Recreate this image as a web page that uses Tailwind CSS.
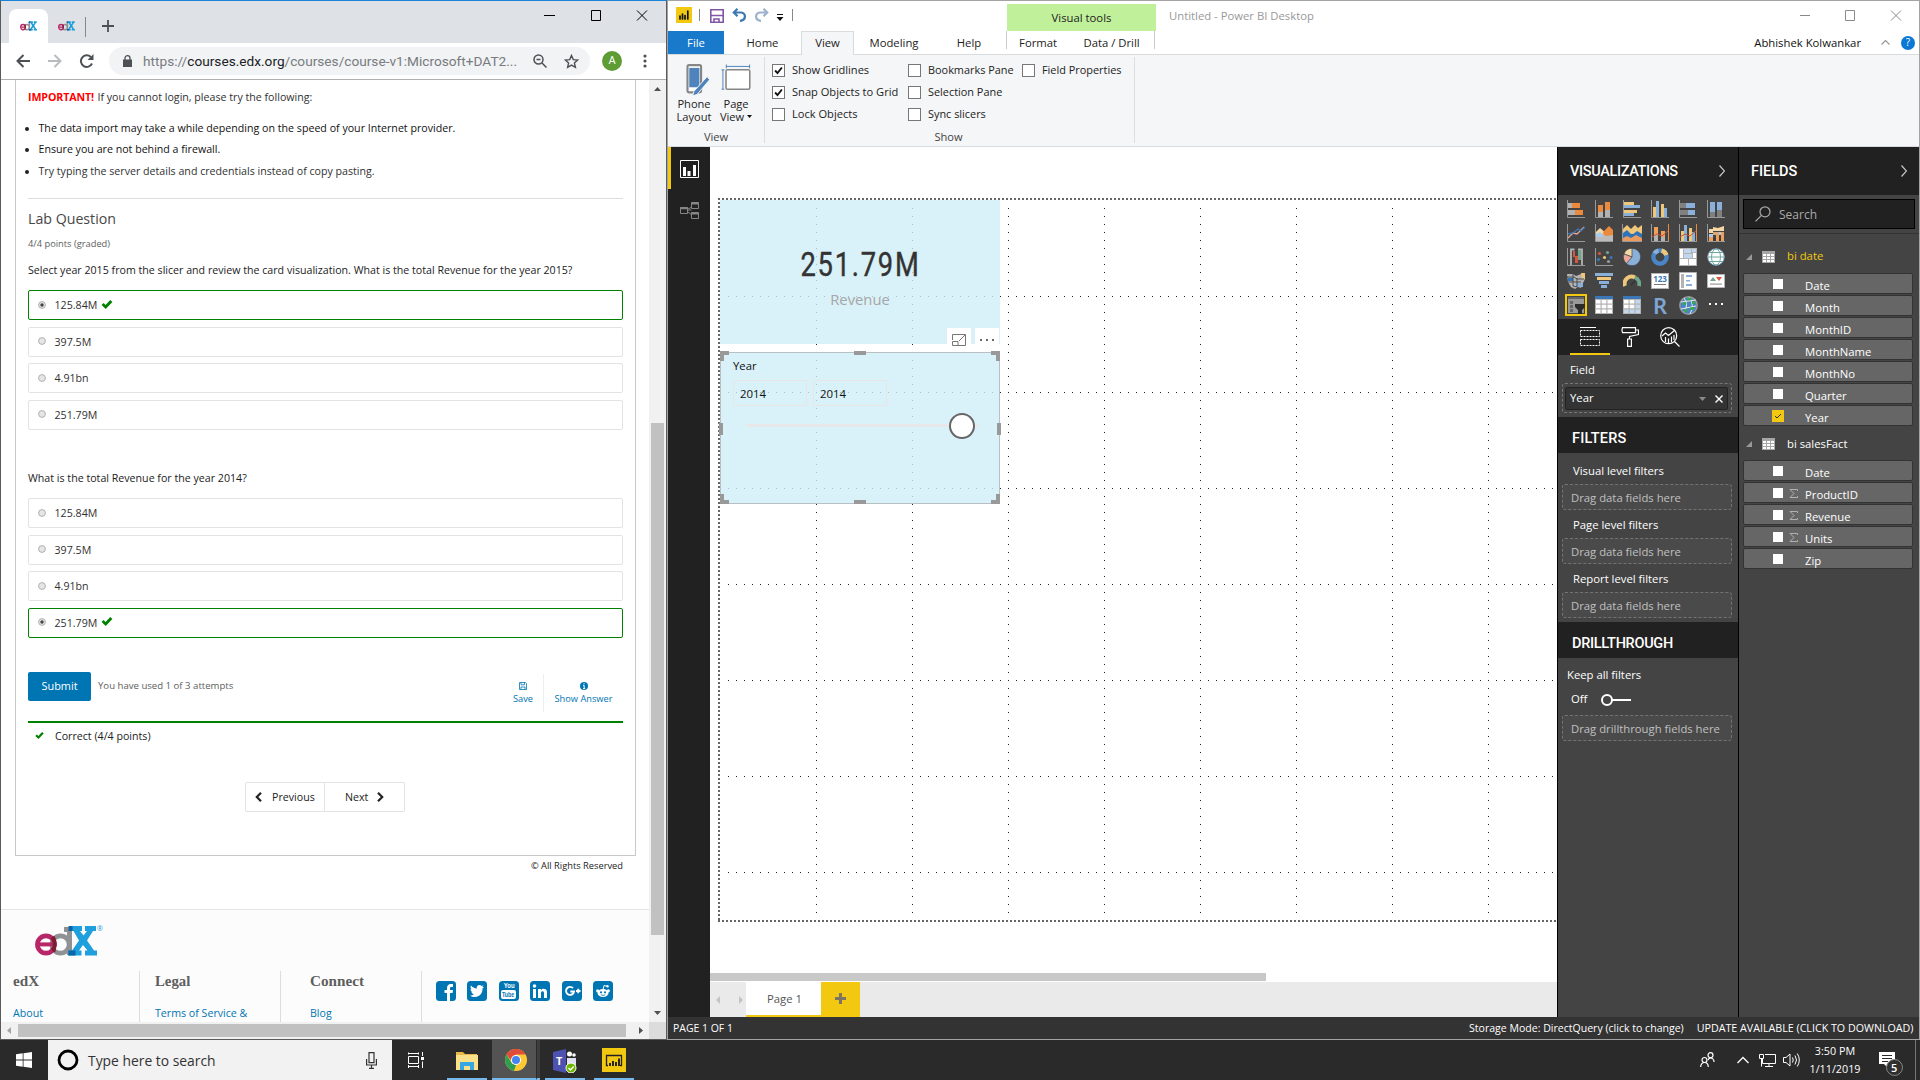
<!DOCTYPE html>
<html lang="en">
<head>
<meta charset="utf-8">
<title>Desktop</title>
<script src="https://cdn.jsdelivr.net/npm/@tailwindcss/browser@4"></script>
</head>
<body class="w-[1920px] h-[1080px] overflow-hidden bg-[#2a2a2a] font-['Open_Sans',sans-serif] flex flex-col whitespace-nowrap">
<svg class="hidden">
  <symbol id="check" viewBox="0 0 12 10"><path d="M0 5.600 2.200 3.400 4.400 5.600 9.600 0 12 2.200 4.600 10Z" fill="#008100"/></symbol>
  <symbol id="tick" viewBox="0 0 13 13"><path d="M2.500 6.500 5.300 9.500 10.500 3" fill="none" stroke="#111" stroke-width="2.200"/></symbol>
  <symbol id="chev" viewBox="0 0 6 12"><path d="M.5.5 5.500 6 .5 11.500" fill="none" stroke="#c8c8c8" stroke-width="1.200"/></symbol>
  <symbol id="table" viewBox="0 0 13 12"><path fill="#a6a6a6" d="M0 0h13v12H0z"/><path fill="#fff" d="M1 3h3v2H1zM5 3h3v2H5zM9 3h3v2H9zM1 6h3v2H1zM5 6h3v2H5zM9 6h3v2H9zM1 9h3v2H1zM5 9h3v2H5zM9 9h3v2H9z"/></symbol>
  <symbol id="edx" viewBox="0 0 64 32">
    <circle cx="25.500" cy="19.500" r="8.600" fill="none" stroke="#8f9194" stroke-width="4.600"/><path d="M31 2h6v28h-5V7h-3V2z" fill="#8f9194"/>
    <circle cx="11" cy="19.500" r="8.600" fill="none" stroke="#b72667" stroke-width="4.600"/><path d="M17 21.300h5.500v3.200H17z" fill="#fcfcfc"/><path d="M3 17.400h18.500v4H3z" fill="#b72667"/>
    <path d="M16 13.500c1.200-1.500 2.400-2.200 3.500-2.500 2.500 4 2.600 12.500.5 16.500-1.600-.8-3-2-4-3.500 2.400-2.500 2.400-7.500 0-10.500z" fill="#7b1c32"/>
    <path d="M36 1h11v5h-2l3.500 4.500L52 6h-2V1h11v5h-3l-6 9.500 7 10h3v5H50v-5h2.500L48 20l-4 5.500h2.500v5H33v-5h4l7-10L38.500 6H34V1z" fill="#1f9fdb"/><path d="M33.500 1h4v5h-4zM33.500 25.500h7v5h-7z" fill="#0b65a8"/>
  </symbol>
</svg>

<div class="flex h-[1040px] shrink-0">

  <!-- Browser window -->
  <section class="w-[667px] h-[1040px] shrink-0 flex flex-col border-t border-l border-r border-b border-t-[#1883d7] border-l-[#5a5a5a] border-r-[#5a5a5a] border-b-[#5a5a5a] bg-white">
    <header class="h-[42px] bg-[#dee1e6] flex shrink-0">
      <div class="mt-2 ml-2 w-[39px] h-[34px] rounded-t-[8px] bg-white flex items-center justify-center"><svg class="w-[17px] h-[10px]" viewBox="0 0 62 32" preserveAspectRatio="none"><use href="#edx" width="64" height="32"/></svg></div>
      <div class="mt-2 w-[37px] h-[34px] flex items-center justify-center"><svg class="w-[17px] h-[10px]" viewBox="0 0 62 32" preserveAspectRatio="none"><use href="#edx" width="64" height="32"/></svg></div>
      <i class="mt-[16px] w-px h-[20px] bg-[#85888c]"></i>
      <svg class="mt-[19px] ml-[16px] size-[12px]" viewBox="0 0 12 12"><path d="M6 0v12M0 6h12" stroke="#4d5156" stroke-width="1.800"/></svg>
      <svg class="mt-[9px] ml-[430px] w-[105px] h-[11px]" viewBox="0 0 105 11" fill="none" stroke="#000"><path d="M0 5.500h11M47.500.5h9v10h-9zM93 .5l10 10M103 .5l-10 10"/></svg>
    </header>
    <div class="h-[37px] border-b border-[#b0b0b0] flex items-center shrink-0">
      <svg class="ml-[15px] w-[78px] h-[14px]" viewBox="0 0 78 14" fill="none" stroke-width="2"><path d="M14 7H1.500M7.500 1 1.500 7l6 6" stroke="#4d5156"/><path d="M32 7h12.500M38.500 1l6 6-6 6" stroke="#b9bbbe"/><path d="M76 9.500A5.800 5.800 0 1 1 74.800 3" stroke="#4d5156"/><path d="M77.500 0v6h-6z" fill="#4d5156"/></svg>
      <div class="ml-[15px] w-[481px] h-[28px] rounded-full bg-[#f1f3f4] flex items-center">
        <svg class="ml-[14px] w-[9px] h-[12px]" viewBox="0 0 9 12"><path d="M0 4.500h9V12H0z" fill="#4d5156"/><path d="M2 5V3a2.500 2.300 0 0 1 5 0v2" fill="none" stroke="#4d5156" stroke-width="1.300"/></svg>
        <span class="ml-[11px] w-[384px] font-['Roboto'] text-[13.660px] text-[#787b80]">https://<span class="text-[#202124]">courses.edx.org</span>/courses/course-v1:Microsoft+DAT2...</span>
        <svg class="ml-[6px] size-[14px]" viewBox="0 0 14 14" fill="none" stroke="#4d5156" stroke-width="1.500"><circle cx="5.500" cy="5.500" r="4.500"/><path d="M9 9l4.500 4.500M3.500 5.500h4" /></svg>
        <svg class="ml-[17px] size-[15px]" viewBox="0 0 15 15" fill="none" stroke="#4d5156" stroke-width="1.400"><path d="M7.500 1.500l1.800 4.100 4.400.4-3.300 3 1 4.400-3.900-2.300-3.900 2.300 1-4.400-3.300-3 4.400-.4z"/></svg>
      </div>
      <span class="ml-[12px] size-[20px] rounded-full bg-[#5f9c34] text-white text-[11px] flex items-center justify-center font-['Roboto']">A</span>
      <svg class="ml-[21px] w-[4px] h-[14px]" viewBox="0 0 4 14" fill="#4d5156"><circle cx="2" cy="2" r="1.600"/><circle cx="2" cy="7" r="1.600"/><circle cx="2" cy="12" r="1.600"/></svg>
    </div>

    <div class="flex h-[942px] shrink-0">
      <main class="w-[648px] h-[942px] overflow-hidden text-[10.650px] text-[#313131] flex flex-col">
        <div class="ml-[14px] w-[621px] h-[776px] shrink-0 border-x border-b border-[#c8c8c8] px-[12px] flex flex-col">
          <div class="h-[34px] pt-[2px] flex items-center shrink-0"><b class="text-[#f00] tracking-[-0.120px]">IMPORTANT!</b><span class="ml-[3.500px]">If you cannot login, please try the following:</span></div>
          <ul class="pt-[4px] shrink-0 text-[#111]">
            <li class="h-[21.500px] flex items-center gap-[10px] -ml-[3.500px]"><i class="size-[4px] rounded-full bg-[#222]"></i>The data import may take a while depending on the speed of your Internet provider.</li>
            <li class="h-[21.500px] flex items-center gap-[10px] -ml-[3.500px]"><i class="size-[4px] rounded-full bg-[#222]"></i>Ensure you are not behind a firewall.</li>
            <li class="h-[21.500px] flex items-center gap-[10px] -ml-[3.500px] text-[#313131]"><i class="size-[4px] rounded-full bg-[#222]"></i>Try typing the server details and credentials instead of copy pasting.</li>
          </ul>
          <hr class="mt-[15.500px] border-0 h-px shrink-0 bg-[#ddd]">
          <h2 class="h-[40px] flex items-center text-[14.200px] shrink-0 text-[#474747]">Lab Question</h2>
          <p class="h-[10px] flex items-center text-[9.300px] shrink-0 text-[#5e5e5e]">4/4 points (graded)</p>
          <p class="h-[41px] pt-[2px] flex items-center shrink-0 text-[#222]">Select year 2015 from the slicer and review the card visualization. What is the total Revenue for the year 2015?</p>
          <div id="q1" class="h-[140px] shrink-0 flex flex-col justify-between"></div>
          <p class="mt-[28px] h-[40px] pt-[2px] flex items-center shrink-0 text-[#222]">What is the total Revenue for the year 2014?</p>
          <div id="q2" class="h-[140px] shrink-0 flex flex-col justify-between"></div>
          <div class="mt-[34px] h-[49px] flex shrink-0">
            <span class="w-[63px] h-[29px] rounded-[2px] bg-[#0075b4] text-white text-[10.900px] flex items-center justify-center">Submit</span>
            <span class="ml-[7px] h-[28px] flex items-center text-[9.600px] text-[#5e5e5e]">You have used 1 of 3 attempts</span>
            <div class="ml-auto flex text-[#0075b4] text-[9.260px] h-[38px] mt-[2px]">
              <div class="w-[41px] pt-[8px] flex flex-col items-center border-r border-[#eee]"><svg class="size-[8px] shrink-0" viewBox="0 0 8 8" fill="none" stroke="#0075b4"><path d="M.5.5h6l1 1v6h-7zM2 .5v2.300h3.500V.5M2 7.500V5h4v2.500" stroke-width=".8"/></svg><span class="h-[18px] flex items-center">Save</span></div>
              <div class="w-[79px] pt-[8px] flex flex-col items-center"><svg class="size-[8px] shrink-0" viewBox="0 0 8 8"><circle cx="4" cy="4" r="4" fill="#0075b4"/><path d="M4 1.200v1.200M3 3.600h1.200v3M3 6.600h2.200" stroke="#fff" fill="none"/></svg><span class="h-[18px] flex items-center">Show Answer</span></div>
            </div>
          </div>
          <div class="border-t-2 border-[#008100] h-[28px] flex items-center shrink-0 text-[#222]"><svg class="ml-[7px] w-[9px] h-[7px] mb-[2px]"><use href="#check"/></svg><span class="ml-[11px] pt-[2px]">Correct (4/4 points)</span></div>
          <div class="mt-[33px] h-[30px] w-[160px] ml-[217px] shrink-0 flex border border-[#e3e3e3] rounded-[2px] text-[#222]">
            <div class="w-[79px] border-r border-[#e3e3e3] flex items-center"><svg class="ml-[9px] w-[7px] h-[10px]" viewBox="0 0 7 10"><path d="M6 .8 1.800 5 6 9.200" fill="none" stroke="#222" stroke-width="2.200"/></svg><span class="ml-[10px] pt-[2px]">Previous</span></div>
            <div class="flex items-center"><span class="ml-[20px] pt-[2px]">Next</span><svg class="ml-[9px] w-[7px] h-[10px]" viewBox="0 0 7 10"><path d="M1 .8 5.200 5 1 9.200" fill="none" stroke="#222" stroke-width="2.200"/></svg></div>
          </div>
        </div>
        <p class="h-[20px] pr-[26px] flex items-center justify-end text-[9.300px] text-[#222] shrink-0">© All Rights Reserved</p>
        <footer class="mt-[33px] h-[113px] border-t border-[#e5e5e5] bg-[#fcfcfc] shrink-0">
          <div class="flex h-[61px]"><svg class="mt-[15px] ml-[34px] w-[64px] h-[32px]"><use href="#edx"/></svg><span class="mt-[14px] text-[7px] leading-[9px] -ml-[2px] text-[#1f9fdb]">®</span></div>
          <div class="flex h-[51px] text-[#0075b4]">
            <div class="w-[139px] pl-[12px] border-r border-[#ddd]"><h3 class="h-[21px] flex items-center font-['Liberation_Serif'] font-bold text-[15.200px] text-[#5e5e5e]">edX</h3><p class="h-[43px] flex items-center">About</p></div>
            <div class="w-[141px] pl-[15px] border-r border-[#ddd]"><h3 class="h-[21px] flex items-center font-['Liberation_Serif'] font-bold text-[14.800px] text-[#5e5e5e]">Legal</h3><p class="h-[43px] flex items-center">Terms of Service &amp;</p></div>
            <div class="w-[141px] pl-[29px] border-r border-[#ddd]"><h3 class="h-[21px] flex items-center font-['Liberation_Serif'] font-bold text-[15.200px] text-[#5e5e5e]">Connect</h3><p class="h-[43px] flex items-center">Blog</p></div>
            <div class="pl-[14px] pt-[10px] flex gap-[11.400px]">
              <svg class="size-[20px]" viewBox="0 0 20 20"><rect width="20" height="20" rx="3.500" fill="#0075b4"/><path d="M11 20v-8H8.500V9H11V7c0-2.600 1.600-4 4-4h2v3h-1.500C14.300 6 14 6.500 14 7.400V9h3l-.4 3H14v8z" fill="#fff"/></svg>
              <svg class="size-[20px]" viewBox="0 0 20 20"><rect width="20" height="20" rx="3.500" fill="#0075b4"/><path d="M17 6l-1.500 1.500c.2 4.500-3 8.500-7.500 8.500-2 0-3.500-.5-5-1.500 1.600 0 3-.3 4-1.200-1.300-.2-2.200-1-2.600-2.200h1.200C4.300 10.700 3.500 9.500 3.500 8l1.200.4C3.500 7.400 3.200 6 4 4.600 5.500 6.400 7.500 7.400 9.800 7.500c-.4-2 .9-3.500 2.700-3.500.9 0 1.600.4 2.100 1l1.900-.7-1.200 1.600z" fill="#fff"/></svg>
              <div class="size-[20px] rounded-[3.500px] bg-[#0075b4] flex flex-col items-center text-white font-['Liberation_Sans'] font-bold"><span class="text-[8px] leading-[8px] scale-x-75 mt-[1px]">You</span><span class="w-[15px] h-[9px] rounded-[2px] bg-white text-[#0075b4] text-[7px] leading-[9px] text-center"><span class="inline-block scale-x-75 -ml-[2px]">Tube</span></span></div>
              <svg class="size-[20px]" viewBox="0 0 20 20"><rect width="20" height="20" rx="3.500" fill="#0075b4"/><path d="M3 8h3v9H3zM8 8h3v1.200c1.600-2.200 6-1.800 6 2V17h-3v-5c0-2.200-3-2.200-3 0v5H8z" fill="#fff"/><circle cx="4.500" cy="5" r="1.800" fill="#fff"/></svg>
              <svg class="size-[20px]" viewBox="0 0 20 20"><rect width="20" height="20" rx="3.500" fill="#0075b4"/><path d="M11 7.200A4 4 0 1 0 12 10.500H8.300M14 10h4.500M16.200 7.800v4.500" fill="none" stroke="#fff" stroke-width="1.900"/></svg>
              <svg class="size-[20px]" viewBox="0 0 20 20"><rect width="20" height="20" rx="3.500" fill="#0075b4"/><ellipse cx="10" cy="12" rx="5.500" ry="4" fill="#fff"/><circle cx="4.700" cy="9.800" r="1.600" fill="#fff"/><circle cx="15.300" cy="9.800" r="1.600" fill="#fff"/><path d="M10 8.500l1-4 3 .8" fill="none" stroke="#fff"/><circle cx="14.500" cy="5.300" r="1.200" fill="#fff"/><circle cx="8" cy="11.300" r="1.100" fill="#0075b4"/><circle cx="12" cy="11.300" r="1.100" fill="#0075b4"/><path d="M7.800 13.800q2.200 1.200 4.400 0" fill="none" stroke="#0075b4" stroke-width=".8"/></svg>
            </div>
          </div>
        </footer>
      </main>
      <div class="w-[17px] bg-[#f1f1f1] flex flex-col items-center">
        <svg class="mt-[7px] w-[7px] h-[4px]" viewBox="0 0 7 4"><path d="M0 4 3.500 0 7 4z" fill="#505050"/></svg>
        <i class="mt-[332px] w-[13px] h-[512px] bg-[#c1c1c1]"></i>
        <svg class="mt-[76px] w-[7px] h-[4px]" viewBox="0 0 7 4"><path d="M0 0 3.500 4 7 0z" fill="#505050"/></svg>
      </div>
    </div>
    <div class="h-[17px] bg-[#f1f1f1] flex items-center">
      <svg class="ml-[6px] w-[4px] h-[7px]" viewBox="0 0 4 7"><path d="M4 0 0 3.500 4 7z" fill="#a3a3a3"/></svg>
      <i class="ml-[7px] w-[608px] h-[13px] bg-[#c1c1c1]"></i>
      <svg class="ml-[13px] w-[4px] h-[7px]" viewBox="0 0 4 7"><path d="M0 0 4 3.500 0 7z" fill="#505050"/></svg>
      <i class="ml-auto w-[17px] h-[17px] bg-[#dcdcdc]"></i>
    </div>
  </section>

  <!-- Power BI Desktop window -->
  <section class="w-[1253px] h-[1040px] shrink-0 flex flex-col border border-[#a3a3a3] bg-white text-[11.300px] text-[#222]">
    <header class="h-[30px] flex shrink-0">
      <svg class="ml-[8px] mt-[6px] size-[16px]" viewBox="0 0 16 16"><path fill="#f2c811" d="M0 0h16v16H0z"/><path d="M4 9v3M6.500 7v5M9 8.500V12M11.800 4v8" stroke="#111" stroke-width="1.700" stroke-linecap="round"/></svg>
      <i class="mt-[8px] ml-[7px] w-px h-[12px] bg-[#888]"></i>
      <svg class="ml-[10px] mt-[8px] size-[14px]" viewBox="0 0 14 14" fill="none" stroke="#8455a5" stroke-width="1.600"><path d="M.8.8h12.400v12.400H.8zM.8 6.500h12.400"/><path d="M4 13.200V10h5v3.200" /></svg>
      <svg class="ml-[8px] mt-[7px] w-[15px] h-[14px]" viewBox="0 0 15 14" fill="none" stroke="#3e78b3" stroke-width="2.200"><path d="M5.500.8 1.800 4.500l3.700 3.700M2 4.500h6.500c6 0 6 7.500-.5 8.500"/></svg>
      <svg class="ml-[7px] mt-[7px] w-[15px] h-[14px]" viewBox="0 0 15 14" fill="none" stroke="#9db2cd" stroke-width="2.200"><path d="M9.500.8l3.700 3.700-3.700 3.700M13 4.500H6.500C.5 4.500.5 12 7 13"/></svg>
      <svg class="ml-[7px] mt-[13px] w-[8px] h-[7px]" viewBox="0 0 8 7"><path d="M1 .5h6" stroke="#111"/><path d="M.5 3h7L4 7z" fill="#111"/></svg>
      <i class="mt-[8px] ml-[8px] w-px h-[12px] bg-[#888]"></i>
      <div class="mt-[3px] ml-[214px] w-[149px] h-[27px] pt-[2px] bg-[#c1f09b] flex items-center justify-center">Visual tools</div>
      <span class="ml-[13px] h-[30px] flex items-center text-[#999]">Untitled - Power BI Desktop</span>
      <svg class="mt-[9px] ml-auto mr-[16px] w-[103px] h-[11px]" viewBox="0 0 103 11" fill="none" stroke="#8a8a8a"><path d="M0 5.500h10M45.500.5h9v10h-9zM91 .5l10 10M101 .5l-10 10"/></svg>
    </header>
    <nav class="h-[24px] flex shrink-0 -mb-px relative">
      <span class="w-[56px] h-[23px] pt-[2px] bg-[#1979ca] text-white flex items-center justify-center">File</span>
      <span class="w-[77px] h-[23px] pt-[2px] flex items-center justify-center">Home</span>
      <span class="w-[53px] h-[24px] flex items-center justify-center bg-[#f5f6f7] border border-b-0 border-[#dadbdc]">View</span>
      <span class="w-[80px] h-[23px] pt-[2px] flex items-center justify-center">Modeling</span>
      <span class="w-[70px] h-[23px] pt-[2px] flex items-center justify-center">Help</span>
      <div class="ml-[2px] w-[149px] h-[18px] flex border-x border-[#ccc]">
        <span class="w-[63px] h-[23px] pt-[2px] flex items-center justify-center">Format</span>
        <span class="w-[86px] h-[23px] pt-[2px] flex items-center justify-center">Data / Drill</span>
      </div>
      <div class="ml-auto flex items-center h-[23px] pr-[4px] text-[#111]"><span class="pt-[1px]">Abhishek Kolwankar</span>
        <svg class="ml-[20px] w-[9px] h-[5px]" viewBox="0 0 9 5"><path d="M.5 4.500l4-4 4 4" fill="none" stroke="#999" stroke-width="1.200"/></svg>
        <span class="ml-[11px] size-[14px] rounded-full bg-[#0a78d4] text-white text-[10px] flex items-center justify-center">?</span>
      </div>
    </nav>
    <div class="h-[93px] bg-[#f5f6f7] border-y border-[#dadbdc] flex shrink-0 text-[11.100px]">
      <div class="w-[96px] flex flex-col">
        <div class="flex h-[72px] pt-[9px] pl-[5px]">
          <div class="w-[42px] flex flex-col items-center leading-[13px]">
            <svg class="w-[26px] h-[32px] ml-[6px]" viewBox="0 0 26 33"><rect x="3.200" y="1.200" width="14" height="28" rx="1.500" fill="#fff" stroke="#868686" stroke-width="2.200"/><path d="M5 4h10.500v20H5z" fill="#4e83bc"/><path d="M23.500 13l2.500 3.200L13 31.500l-4.500 1.300 1.300-4.600z" fill="#4e83bc" stroke="#f5f6f7"/></svg>
            <span class="mt-[1px]">Phone</span><span>Layout</span>
          </div>
          <div class="w-[42px] flex flex-col items-center leading-[13px]">
            <svg class="w-[30px] h-[32px]" viewBox="0 0 30 33" fill="none"><path d="M5 2.500h24M5 .5v4M29 .5v4M1.500 6v20M0 6h3M0 26h3" stroke="#4e83bc"/><rect x="4.700" y="6" width="24.500" height="20" rx="1.500" fill="#fff" stroke="#868686" stroke-width="1.600"/></svg>
            <span class="mt-[1px]">Page</span><span class="flex items-center gap-[3px]">View<svg class="w-[5px] h-[3px]" viewBox="0 0 5 3"><path d="M0 0h5L2.500 3z" fill="#111"/></svg></span>
          </div>
        </div>
        <span class="text-center h-[19px] leading-[20px] text-[#444]">View</span>
      </div>
      <i class="mt-[2px] w-px h-[86px] bg-[#dcdddf]"></i>
      <div class="w-[369px] flex flex-col">
        <div id="checks" class="flex h-[72px] pt-[4px] pl-[6px]"></div>
        <span class="text-center h-[19px] leading-[20px] text-[#444]"><span class="mr-[2px]">Show</span></span>
      </div>
      <i class="mt-[2px] w-px h-[86px] bg-[#dcdddf]"></i>
    </div>

    <div class="h-[870px] flex shrink-0">
      <aside class="w-[42px] bg-[#212121] flex flex-col">
        <div class="h-[42px] border-l-[3px] border-[#f2c811] pl-[9px] pt-[13px]"><svg class="w-[19px] h-[18px]" viewBox="0 0 19 18"><path d="M.5.5h18v17H.5z" fill="none" stroke="#fff"/><path d="M3 7h3v9H3zM7.500 11h3v5h-3zM13 5h3v11h-3z" fill="#fff"/></svg></div>
        <svg class="ml-[12px] mt-[13px] w-[20px] h-[18px]" viewBox="0 0 20 18" fill="none" stroke="#858585"><path d="M.5 5.500h7v6h-7zM11.500.5h7v6h-7zM11.500 10.500h7v6h-7zM8 8h3.500M8 7l4-2M8 10l4 3"/><path d="M0 6.200h8M11 1.500h8M11 11.500h8" stroke-width="2"/></svg>
      </aside>
      <div class="w-[847px] flex flex-col">
        <div class="relative h-[826px] overflow-hidden bg-white">
          <svg class="absolute inset-0 w-[847px] h-[826px]" shape-rendering="crispEdges">
            <defs>
              <pattern id="cols" x="106" y="61" width="96" height="8" patternUnits="userSpaceOnUse"><rect width="1" height="1" fill="#222"/></pattern>
              <pattern id="rows" x="18" y="149" width="8" height="96" patternUnits="userSpaceOnUse"><rect width="1" height="1" fill="#222"/></pattern>
            </defs>
            <rect x="14" y="58" width="833" height="708" fill="url(#cols)"/><rect x="14" y="58" width="833" height="714" fill="url(#rows)"/>
            <path d="M8 52h839M8 774h839M9 51v724" stroke="#666" stroke-width="2" stroke-dasharray="2 2"/>
          </svg>
          <div class="absolute left-[10px] top-[53px] w-[280px] h-[144px] bg-[#ceedf6]/78 flex flex-col items-center">
            <span class="mt-[45px] h-[40px] leading-[40px] font-['Roboto'] text-[32.500px] [-webkit-text-stroke:0.400px_#333] tracking-[2.100px] scale-x-[0.840] text-[#333]">251.79M</span>
            <span class="mt-px h-[26px] leading-[26px] text-[14.770px] text-[#a6a6a6]">Revenue</span>
          </div>
          <svg class="absolute left-[237px] top-[181px] w-[52px] h-[18px]" viewBox="0 0 52 18" fill="none"><path d="M0 0h24v18H0zM28 0h24v18H28z" fill="#fff"/><path d="M5.500 12V6.500h9M18.500 10v7.500h-13V13.500h5.500v4M12 13l6-6M14 6.500h4.500V11" stroke="#777"/><path d="M33 11h2v2h-2zM39 11h2v2h-2zM45 11h2v2h-2z" fill="#666"/></svg>
          <div class="absolute left-[10px] top-[205px] w-[280px] h-[152px] bg-[#ceedf6]/78 border border-[#b9bfc2] text-[#111] pl-[12px] pt-[4px]">
            <p class="h-[17px] leading-[17px]">Year</p>
            <div class="mt-[6px] flex gap-[6px] text-[11.400px]">
              <span class="w-[74px] h-[26px] border border-[#eae5e5] pl-[6px] leading-[25px]">2014</span>
              <span class="w-[74px] h-[26px] border border-[#eae5e5] pl-[6px] leading-[25px]">2014</span>
            </div>
            <div class="relative mt-[18px] ml-[13px] w-[233px] h-[3px] rounded bg-[#e8e8e8]"><i class="absolute left-[203px] -top-[11px] size-[26px] rounded-full bg-white border-2 border-[#666]"></i></div>
          </div>
          <svg class="absolute left-[9px] top-[203px] w-[283px] h-[156px]" viewBox="0 0 283 156" fill="none" stroke="#999" stroke-width="4"><path d="M10 3H3v8M272 3h7v8M10 152H3v-8M272 152h7v-8M135 3h12M135 152h12M2 73v12M280 73v12"/></svg>
        </div>
        <i class="w-[556px] h-[8px] bg-[#c8c8c8] shrink-0"></i>
        <div class="mt-px h-[35px] bg-[#eaeaea] flex shrink-0">
          <svg class="ml-[6px] mt-[14px] w-[28px] h-[8px]" viewBox="0 0 28 8" fill="#c4c4c4"><path d="M4 0v8L0 4zM23 0v8l4-4z"/></svg>
          <span class="ml-[2px] w-[75px] h-[35px] pt-[2px] pl-[2px] bg-white border-b-2 border-[#f2c811] flex items-center justify-center text-[#555]">Page 1</span>
          <span class="w-[39px] h-[35px] bg-[#f2c811] flex justify-center"><svg class="mt-[11px] size-[11px]" viewBox="0 0 11 11"><path d="M5.500 0v11M0 5.500h11" stroke="#7d7464" stroke-width="3"/></svg></span>
        </div>
      </div>

      <aside class="w-[181px] border-l border-black bg-[#444] text-white flex flex-col">
        <h2 class="h-[48px] shrink-0 bg-[#212121] flex items-center px-[12px] font-['Roboto'] font-medium text-[14.500px] tracking-[-0.350px]"><span class="pt-[2px]">VISUALIZATIONS</span><svg class="ml-auto mr-[1px] w-[6px] h-[12px]"><use href="#chev"/></svg></h2>
        <div class="h-[124px] shrink-0 grid grid-cols-[repeat(6,28px)] auto-rows-[24px] pl-[9px] pt-[5px]">
          <svg class="size-[18px]" viewBox="0 0 18 18"><path d="M.5 0v17.500H18" fill="none" stroke="#999"/><path fill="#b3b3b3" d="M1 3h4v5H1zM1 10h7v5H1z"/><path fill="#ea8a3e" d="M5 3h8v5H5zM8 10h8v5H8z"/></svg>
          <svg class="size-[18px]" viewBox="0 0 18 18"><path d="M.5 0v17.500H18" fill="none" stroke="#999"/><path fill="#b3b3b3" d="M3 12h5v5H3zM10 9h5v8h-5z"/><path fill="#ea8a3e" d="M3 5h5v7H3zM10 2h5v8h-5z"/></svg>
          <svg class="size-[18px]" viewBox="0 0 18 18"><path d="M.5 0v17.500H18" fill="none" stroke="#999"/><path fill="#efc77b" d="M1 2h10v3H1zM1 10h13v3H1z"/><path fill="#8ab0da" d="M1 5h16v3H1zM1 13h10v3H1z"/></svg>
          <svg class="size-[18px]" viewBox="0 0 18 18"><path d="M.5 0v17.500H18" fill="none" stroke="#999"/><path fill="#efc77b" d="M2 7h3v10H2zM10 4h3v13h-3z"/><path fill="#8ab0da" d="M5 1h3v16H5zM13 8h3v9h-3z"/></svg>
          <svg class="size-[18px]" viewBox="0 0 18 18"><path d="M.5 0v17.500H18" fill="none" stroke="#999"/><path fill="#808080" d="M1 3h6v5H1zM1 10h8v5H1z"/><path fill="#8ab0da" d="M7 3h9v5H7zM9 10h7v5H9z"/></svg>
          <svg class="size-[18px]" viewBox="0 0 18 18"><path d="M.5 0v17.500H18" fill="none" stroke="#999"/><path fill="#808080" d="M3 12h5v5H3zM10 10h5v7h-5z"/><path fill="#8ab0da" d="M3 2h5v10H3zM10 2h5v8h-5z"/></svg>

          <svg class="size-[18px]" viewBox="0 0 18 18" fill="none"><path d="M.5 0v17.500H18" stroke="#999"/><path d="M1 14l5-5 4 1 7-7" stroke="#e6a595" stroke-width="1.300"/><path d="M1 10l5-1 5-4 3 2 4-4" stroke="#3b77b7" stroke-width="1.300"/></svg>
          <svg class="size-[18px]" viewBox="0 0 18 18"><path d="M.5 0v17.500H18" fill="none" stroke="#999"/><path d="M1 8l4-4 6 5 7 3v5H1z" fill="#f3d9a8"/><path d="M8 8l6-6 4 4v8H9z" fill="#ea8a3e"/><path d="M1 11l5-2 5 3 7-1v6H1z" fill="#bcbcbc"/><path d="M1 10l4-2 4 5H1z" fill="#a9cbe9"/></svg>
          <svg class="-ml-px w-[20px] h-[18px]" viewBox="0 0 20 18"><path d="M.5 0v17.500H20" fill="none" stroke="#999"/><path d="M1 5l4-4 4 4 4-4 3 3 4-3v9H1z" fill="#efc77b"/><path d="M1 9l4-3 5 5 5-4 5 3v5H1z" fill="#2e74bd"/><path d="M1 14l4-2 4 2 5-3 6 3v3H1z" fill="#ea9a5e"/></svg>
          <svg class="size-[18px]" viewBox="0 0 18 18"><path d="M.5 0v17.500H18" fill="none" stroke="#999"/><path fill="#b3b3b3" d="M3 11h4v6H3zM10 13h4v4h-4z"/><path fill="#f0a05a" d="M3 3h4v8H3zM10 7h4v6h-4z"/><path d="M1 13l5-3 5 2 6-5" fill="none" stroke="#c8543a"/><path d="M17.500 0v17" stroke="#ea8a3e"/></svg>
          <svg class="size-[18px]" viewBox="0 0 18 18"><path d="M.5 0v17.500H18" fill="none" stroke="#999"/><path fill="#efc77b" d="M2 7h3v10H2zM10 4h3v13h-3z"/><path fill="#8ab0da" d="M5 1h3v16H5zM13 8h3v9h-3z"/><path d="M1 13l5-3 5 2 6-5" fill="none" stroke="#c8543a"/><path d="M17.500 0v17" stroke="#ea8a3e"/></svg>
          <svg class="size-[18px]" viewBox="0 0 18 18"><path d="M.5 0v17.500H18" fill="none" stroke="#999"/><path fill="#f5d6a6" d="M2 5h4v4H2zM6 3l5 1 6-2v5H6z"/><path fill="#f0a05a" d="M2 13h4v4H2zM9 10h3v7H9zM14 8h3v9h-3z"/><path fill="#3c3c3c" d="M6 14h3v3H6zM12 13h2v4h-2z"/><path fill="#d9a877" d="M6 8h8v3H6z"/><path fill="#a9cbe9" d="M2 10h4v3H2zM12 8h2v3h-2z"/></svg>

          <svg class="size-[18px]" viewBox="0 0 18 18"><path d="M.5 0v17.500H18" fill="none" stroke="#999"/><path d="M4 17V1.500h3.500M11 1.500h4V17" fill="none" stroke="#b3b3b3" stroke-width="1.800"/><path fill="#d9543c" d="M6 3h2v6H6zM8 8h3v7H8z"/><path fill="#70a58e" d="M11 2h3v10h-3z"/></svg>
          <svg class="size-[18px]" viewBox="0 0 18 18"><path d="M.5 0v17.500H18" fill="none" stroke="#999"/><circle cx="4.500" cy="5.500" r="1.600" fill="#d9543c"/><circle cx="12.500" cy="4.500" r="1.600" fill="#70a58e"/><circle cx="9.500" cy="9.500" r="1.600" fill="#efc77b"/><circle cx="3.500" cy="11.500" r="1.600" fill="#3b77b7"/><circle cx="16" cy="9.500" r="1.600" fill="#3b77b7"/><circle cx="13.500" cy="13.500" r="1.600" fill="#999"/></svg>
          <svg class="size-[18px]" viewBox="0 0 18 18" stroke="#444" stroke-width=".7"><circle cx="9" cy="9" r="8.700" fill="#8ab0da"/><path d="M9 9V.3A8.700 8.700 0 0 0 1 6z" fill="#f3d9a8"/><path d="M9 9 1 6a8.700 8.700 0 0 0 2.500 9.500z" fill="#eaa89c"/></svg>
          <svg class="size-[18px]" viewBox="0 0 18 18" fill="none" stroke-width="4.400"><circle cx="9" cy="9" r="6.600" stroke="#4a86c6"/><path d="M10.500 2.600a6.600 6.600 0 0 1 4.800 4.500" stroke="#efc77b"/><path d="M3.500 5.300a6.600 6.600 0 0 1 4-2.700" stroke="#8ab0da"/></svg>
          <svg class="size-[18px]" viewBox="0 0 18 18"><path fill="#b3b3b3" d="M0 0h18v18H0z"/><path fill="#fff" d="M1 1h3v9H1zM1 11h8v6H1zM10 11h7v6h-7zM14 5h3v5h-3z"/><path fill="#c2d6ee" d="M5 1h7v4H5zM5 6h8v4H5zM13 1h4v3h-4z"/></svg>
          <svg class="size-[18px]" viewBox="0 0 18 18" fill="none" stroke="#6fa79a"><circle cx="9" cy="9" r="8.200" fill="#fff" stroke="#8ab0da"/><ellipse cx="9" cy="9" rx="4.500" ry="8"/><path d="M1 9h16M2.500 4.500h13M2.500 13.500h13"/></svg>

          <svg class="size-[18px]" viewBox="0 0 18 18"><path d="M0 2h6l3 2 5-2 4-1v6l-2 4-2 5-3-1-3 2-4-2-3-5z" fill="#b3b3b3"/><path d="M1 6h5v3H1z" fill="#2e74bd"/><path d="M14 1h4v6h-3z" fill="#efc77b"/><path d="M9 11h7v4H9z" fill="#8ab0da"/><path d="M0 5h7l3 2h7M6 2v12l4 1M10 6v9M1 10h13" fill="none" stroke="#444" stroke-width=".9"/></svg>
          <svg class="size-[18px]" viewBox="0 0 18 18"><path fill="#8ab0da" d="M0 1h18v3H0z"/><path fill="#efc77b" d="M2 5h14v3H2z"/><path fill="#8ab0da" d="M4 9h10v3H4zM6 13h6v3H6z"/></svg>
          <svg class="size-[18px]" viewBox="0 0 18 18" fill="none" stroke-width="4"><path d="M2 14a7 7 0 0 1 10-8.500" stroke="#efc77b"/><path d="M12 5.500A7 7 0 0 1 16 14" stroke="#70a58e"/><path d="M8 13l4-4" stroke="#333" stroke-width="1.500"/></svg>
          <div class="w-[18px] h-[16px] mt-[1px] bg-white border border-[#b3b3b3] flex flex-col items-center"><span class="text-[8px] leading-[9px] font-bold text-[#3b77b7]">123</span><i class="mt-px w-[12px] h-px bg-[#777]"></i></div>
          <svg class="size-[18px]" viewBox="0 0 18 18"><path fill="#fff" stroke="#b3b3b3" d="M.5.5h17v17H.5z"/><path fill="#b3b3b3" d="M2 2h3v14H2z"/><path fill="#8ab0da" d="M7 3h6v2H7zM7 8h4v1.500H7zM7 12h6v2H7z"/></svg>
          <svg class="size-[18px]" viewBox="0 0 18 18"><path fill="#fff" stroke="#b3b3b3" d="M.5 2.500h17v13H.5z"/><path fill="#70a58e" d="M3 9l3-4 3 4z"/><path fill="#d9543c" d="M9 5h6l-3 4z"/><path fill="#999" d="M3 11.500h12v1.200H3z"/></svg>

          <svg class="-ml-[2px] -mt-[2px] size-[22px]" viewBox="0 0 22 22"><path d="M1 1h20v20H1z" fill="#444" stroke="#f2c811" stroke-width="2"/><path fill="#999" d="M3 3h16v16H3z"/><path fill="#666" d="M3 3h16v2H3zM5 7h3v3H5zM5 11h3v3H5zM5 15h3v3H5z"/><path fill="#2b2b2b" d="M10 10h10v3l-3 3v4h-4v-4l-3-3z"/></svg>
          <svg class="size-[18px]" viewBox="0 0 18 18"><path fill="#b3b3b3" d="M0 0h18v18H0z"/><path fill="#3b77b7" d="M0 0h18v3H0z"/><path fill="#fff" d="M1 4h4.500v3.500H1zM6.700 4h4.600v3.500H6.700zM12.500 4H17v3.500h-4.500zM1 8.700h4.500v3.600H1zM6.700 8.700h4.600v3.600H6.700zM12.500 8.700H17v3.600h-4.500zM1 13.500h4.500V17H1zM6.700 13.500h4.600V17H6.700zM12.500 13.500H17V17h-4.500z"/></svg>
          <svg class="size-[18px]" viewBox="0 0 18 18"><path fill="#b3b3b3" d="M0 0h18v18H0z"/><path fill="#3b77b7" d="M0 0h18v3H0z"/><path fill="#fff" d="M1 4h4.500v3.500H1zM6.700 4h4.600v3.500H6.700zM1 8.700h4.500v3.600H1zM6.700 8.700h4.600v3.600H6.700z"/><path fill="#c2d6ee" d="M12.500 4H17v3.500h-4.500zM12.500 8.700H17v3.600h-4.500zM1 13.500h4.500V17H1zM6.700 13.500h4.600V17H6.700zM12.500 13.500H17V17h-4.500z"/></svg>
          <span class="w-[18px] h-[18px] text-[22px] leading-[18px] font-semibold text-[#7fa5d3] pl-[2px] font-['Noto_Sans']">R</span>
          <svg class="size-[19px]" viewBox="0 0 19 19" fill="none"><circle cx="9.500" cy="9.500" r="8.700" fill="#4a86c6" stroke="#9a9a9a" stroke-width="1.400"/><path d="M2 6l15-2M2 13l15-3M5 2q5 7 0 14M10 1q6 8 1 17" stroke="#e8e8e8"/><path d="M8 3h4M4 8l3-1M11 13l4-1M5 15l3-1M13 7l3-1" stroke="#39a845" stroke-width="2.500"/></svg>
          <svg class="size-[18px]" viewBox="0 0 18 18" fill="#fff"><path d="M2 7h2v2H2zM8 7h2v2H8zM14 7h2v2h-2z"/></svg>
        </div>
        <div class="h-[36px] shrink-0 bg-[#212121] pl-[12px] flex">
          <div class="w-[40px] h-[36px] border-b-2 border-[#f2c811] pl-[10px] pt-[8px]"><svg class="w-[20px] h-[20px]" viewBox="0 0 20 20" fill="none" stroke="#fff"><path d="M0 .5h16"/><path d="M.5 3.500h19v6H.5zM.5 12.500h19v6H.5z" stroke-dasharray="2 1"/></svg></div>
          <svg class="mt-[8px] ml-[11px] w-[18px] h-[20px]" viewBox="0 0 18 20" fill="none" stroke="#fff" stroke-width="1.200"><path d="M1.500.6h13v5h-13q-1-2.500 0-5zM14.500 3h3v4.500l-9 2V12M6.600 12h3.800v7.400H6.600z"/></svg>
          <svg class="mt-[8px] ml-[21px] w-[20px] h-[20px]" viewBox="0 0 20 20" fill="none" stroke="#fff" stroke-width="1.200"><circle cx="8.700" cy="8.700" r="8"/><path d="M14.500 14.500l5 5M2 9l3.500-3 3 2.500L15 3M5.500 10v5M8.500 11.500V16M11.500 9.500v6M14 8v5" /></svg>
        </div>
        <p class="h-[28px] shrink-0 flex items-center pl-[12px] pt-[2px]">Field</p>
        <div class="ml-[4px] w-[170px] h-[30px] shrink-0 border border-dashed border-[#777] rounded-[3px] p-[3px] pl-[2px] flex"><div class="w-full h-[23px] rounded-[2px] border border-[#222] bg-[#333] flex items-center pl-[4px]">Year<svg class="ml-auto w-[7px] h-[4px]" viewBox="0 0 7 4"><path d="M0 0h7L3.500 4z" fill="#8a8a8a"/></svg><svg class="ml-[9px] mr-[4px] size-[8px]" viewBox="0 0 8 8"><path d="M.5.5l7 7M7.500.5l-7 7" stroke="#fff" stroke-width="1.400"/></svg></div></div>
        <h2 class="mt-[4px] h-[36px] shrink-0 bg-[#212121] flex items-center pl-[14px] pt-[7px] font-['Roboto'] font-medium text-[14.500px] tracking-[0.200px]">FILTERS</h2>
        <p class="h-[31px] shrink-0 flex items-center pl-[15px] pt-[5px]">Visual level filters</p>
        <div class="ml-[4px] w-[170px] h-[26px] shrink-0 border border-dashed border-[#737373] rounded-[3px] bg-[#4a4a4a] pl-[8px] pt-[2px] flex items-center text-[#c0c0c0]">Drag data fields here</div>
        <p class="h-[28px] pt-[2px] shrink-0 flex items-center pl-[15px]">Page level filters</p>
        <div class="ml-[4px] w-[170px] h-[26px] shrink-0 border border-dashed border-[#737373] rounded-[3px] bg-[#4a4a4a] pl-[8px] pt-[2px] flex items-center text-[#c0c0c0]">Drag data fields here</div>
        <p class="h-[28px] pt-[2px] shrink-0 flex items-center pl-[15px]">Report level filters</p>
        <div class="ml-[4px] w-[170px] h-[26px] shrink-0 border border-dashed border-[#737373] rounded-[3px] bg-[#4a4a4a] pl-[8px] pt-[2px] flex items-center text-[#c0c0c0]">Drag data fields here</div>
        <h2 class="mt-[4px] h-[36px] shrink-0 bg-[#212121] flex items-center pl-[14px] pt-[7px] font-['Roboto'] font-medium text-[14.500px] tracking-[-0.300px]">DRILLTHROUGH</h2>
        <p class="h-[33px] pt-[1px] shrink-0 flex items-center pl-[9px]">Keep all filters</p>
        <div class="h-[24px] shrink-0 flex items-center pl-[13px] pb-[8px]">Off<svg class="ml-[14px] mt-[1px] w-[30px] h-[12px]" viewBox="0 0 30 12" fill="none" stroke="#fff"><circle cx="6" cy="6" r="5" stroke-width="2"/><path d="M11 6h19" stroke-width="2"/></svg></div>
        <div class="ml-[4px] w-[170px] h-[26px] shrink-0 border border-dashed border-[#737373] rounded-[3px] bg-[#4a4a4a] pl-[8px] pt-[2px] flex items-center text-[#c0c0c0]">Drag drillthrough fields here</div>
      </aside>

      <aside class="w-[181px] border-l border-black bg-[#444] text-white flex flex-col">
        <h2 class="h-[48px] shrink-0 bg-[#212121] flex items-center px-[12px] font-['Roboto'] font-medium text-[14.500px]"><span class="pt-[2px]">FIELDS</span><svg class="ml-auto mr-0 w-[6px] h-[12px]"><use href="#chev"/></svg></h2>
        <div class="mt-[4px] ml-[4px] w-[172px] h-[30px] shrink-0 border border-black bg-[#212121] flex items-center text-[12px] text-[#aaa]"><svg class="ml-[11px] size-[16px]" viewBox="0 0 16 16" fill="none" stroke="#aaa" stroke-width="1.200"><circle cx="10" cy="5.800" r="5"/><path d="M6.400 9.400.5 15.300"/></svg><span class="ml-[8px] pt-[1px]">Search</span></div>
        <div class="mt-[4px] h-[40px] shrink-0 border-t border-[#333] flex items-center text-[#f2c811] pl-[7px] pt-[6px]"><svg class="size-[6px]" viewBox="0 0 6 6"><path d="M6 0v6H0z" fill="#999"/></svg><svg class="ml-[10px] w-[13px] h-[12px]"><use href="#table"/></svg><span class="ml-[12px]">bi date</span></div>
        <div id="f1" class="pl-[4px] flex flex-col gap-px shrink-0"></div>
        <div class="h-[34px] pt-[2px] shrink-0 flex items-center pl-[7px]"><svg class="size-[6px]" viewBox="0 0 6 6"><path d="M6 0v6H0z" fill="#999"/></svg><svg class="ml-[10px] w-[13px] h-[12px]"><use href="#table"/></svg><span class="ml-[12px]">bi salesFact</span></div>
        <div id="f2" class="pl-[4px] flex flex-col gap-px shrink-0"></div>
      </aside>
    </div>
    <footer class="h-[22px] bg-[#333] text-white flex items-center shrink-0 pl-[5px] pr-[5.500px] pt-px">
      <span class="text-[10.460px]">PAGE 1 OF 1</span><span class="ml-auto text-[10.560px]">Storage Mode: DirectQuery (click to change)</span><span class="ml-[13px] text-[10.700px]">UPDATE AVAILABLE (CLICK TO DOWNLOAD)</span>
    </footer>
  </section>
</div>

<!-- Taskbar -->
<footer class="h-[40px] shrink-0 bg-[#2a2a2a] flex text-white">
  <div class="w-[48px] flex items-center justify-center"><svg class="size-[16px]" viewBox="0 0 16 16" fill="#fff"><path d="M0 2.200 6.700 1.300V7.600H0zM7.500 1.200 16 0v7.600H7.500zM0 8.400h6.700v6.300L0 13.800zM7.500 8.400H16V16l-8.500-1.200z"/></svg></div>
  <div class="w-[344px] bg-[#f2f2f2] flex items-center text-[#333] text-[13.860px]">
    <svg class="ml-[9px] size-[22px]" viewBox="0 0 22 22"><circle cx="11" cy="11" r="9" fill="none" stroke="#000" stroke-width="2.800"/></svg><span class="ml-[9px] pt-[2px]">Type here to search</span>
    <svg class="ml-auto mr-[15px] w-[11px] h-[17px]" viewBox="0 0 11 17" fill="none" stroke="#333" stroke-width="1.200"><path d="M3 .6h5v10H3zM.6 7v6h9.800V7M5.500 13v3.500M3 16.400h5"/></svg>
  </div>
  <svg class="mt-[12px] ml-[16px] w-[16px] h-[16px]" viewBox="0 0 16 16" fill="none" stroke="#fff"><path d="M.5 4.500h10v7H.5zM.5 2.500v-2M0 1.500h11M10.500 2.500v-2M.5 13v3M0 14.500h11M10.500 13v3M14.500 0v4M14.500 9.500V16"/><path d="M13 5h3v3h-3z" fill="#fff" stroke="none"/></svg>
  <div class="ml-[23px] w-[40px] border-b-2 border-[#76b9ed] flex justify-center pt-[12px]"><svg class="w-[22px] h-[18px]" viewBox="0 0 22 18"><path d="M0 0h7l2 2h12v16H0z" fill="#e9b94a"/><path d="M0 3h22v15H0z" fill="#fbe08a"/><path d="M4 18V10h14v8h-4v-4H8v4z" fill="#35a7e5"/></svg></div>
  <div class="ml-[5px] w-[44px] bg-[#535353] border-b-2 border-[#76b9ed] flex justify-center pt-[9px]"><svg class="size-[22px] ml-[3px]" viewBox="0 0 22 22"><circle cx="11" cy="11" r="11" fill="#fcc934"/><path d="M1.500 5.500A11 11 0 0 1 20.500 5.500H11L6.500 12z" fill="#e14b3b"/><path d="M1.500 5.500 7 14.500 11 16l-2 5.800A11 11 0 0 1 1.500 5.500z" fill="#2e9e51"/><circle cx="11" cy="11" r="5" fill="#fff"/><circle cx="11" cy="11" r="4" fill="#4484f0"/></svg></div>
  <i class="w-[4px] bg-[#3d3d3d] border-b-2 border-[#76b9ed] border-l border-l-[#2a2a2a]"></i>
  <div class="ml-[5px] w-[40px] border-b-2 border-[#76b9ed] flex pl-[8px] pt-[9px]"><div class="relative w-[24px] h-[24px]"><svg class="size-[24px]" viewBox="0 0 24 24"><circle cx="16.500" cy="5" r="2.500" fill="#fff"/><circle cx="21" cy="6" r="1.800" fill="#fff"/><path d="M14 9h9v7l-4 4h-5z" fill="#dfe0f5"/><path d="M0 3l13-3v24L0 21z" fill="#4d52b0"/><circle cx="18" cy="19" r="5" fill="#6bb700" stroke="#fff"/><path d="M15.500 19l2 2 3.200-3.500" fill="none" stroke="#fff" stroke-width="1.400"/></svg><span class="absolute left-[3px] top-[5px] text-[11px] leading-[14px] font-bold">T</span></div></div>
  <div class="ml-[9px] w-[40px] border-b-2 border-[#76b9ed] flex pl-[8px] pt-[8px]"><svg class="size-[24px]" viewBox="0 0 24 24"><path fill="#f2c811" d="M0 0h24v24H0z"/><path d="M6 17.500H4.500v-10h15v10H18" fill="none" stroke="#222" stroke-width="1.300"/><path d="M8 15v3M11 13v5M14 14v4M17 10.500v7.500" stroke="#222" stroke-width="1.900"/></svg></div>
  <div class="ml-auto flex">
    <svg class="mt-[12px] w-[15px] h-[16px]" viewBox="0 0 15 16" fill="none" stroke="#fff" stroke-width="1.200"><circle cx="4.500" cy="8" r="2.500"/><path d="M.6 15q.5-4.500 4-4.500T8.300 15"/><circle cx="10.500" cy="3.200" r="2.500"/><path d="M8 8q.8-2 2.600-2 3 0 3.500 4"/></svg>
    <svg class="mt-[16px] ml-[22px] w-[12px] h-[8px]" viewBox="0 0 12 8"><path d="M.5 7 6 1.500 11.500 7" fill="none" stroke="#fff" stroke-width="1.300"/></svg>
    <svg class="mt-[13px] ml-[10px] w-[17px] h-[15px]" viewBox="0 0 17 15" fill="none" stroke="#fff"><path d="M6 1.500h10.500v9H3.500V6M.5 1.500h4v4h-4zM10 10.500v3M6 13.500h8M2.500 6v7.500"/></svg>
    <svg class="mt-[12px] ml-[7px] w-[17px] h-[16px]" viewBox="0 0 17 16" fill="none" stroke="#fff"><path d="M.5 5.500H3l4-3.500v12l-4-3.500H.5zM9.500 5.500q1.500 2.500 0 5M12 3.500q3 4.500 0 9M14.300 1.500q4 6.500 0 13"/></svg>
    <div class="ml-[6px] w-[58px] flex flex-col items-center text-[10.770px] leading-[18px] pt-[2px]"><span>3:50 PM</span><span>1/11/2019</span></div>
    <div class="relative ml-[15px] mt-[12px] w-[24px] h-[24px]"><svg class="size-[24px]" viewBox="0 0 24 24"><path d="M0 0h16v12H9v4l-4-4H0z" fill="#fff"/><path d="M3 3.500h10M3 6.500h10M3 9.500h6" stroke="#2a2a2a"/><circle cx="15.500" cy="15.500" r="8" fill="#2f2f2f" stroke="#888"/></svg><span class="absolute left-[12px] top-[8px] text-[11px] leading-[15px] font-semibold">5</span></div>
    <i class="ml-[12px] mr-[4px] w-px h-[40px] bg-[#777]"></i>
  </div>
</footer>

<script>
const option = ([text, on]) => `
  <label class="h-[30px] w-full shrink-0 rounded-[2px] border flex items-center ${on ? 'border-[#008100]' : 'border-[#e3e3e3]'}">
    <svg class="ml-[8.500px] size-[8px] mb-px" viewBox="0 0 8 8"><circle cx="4" cy="4" r="3.400" fill="#e6e6e6" stroke="#a8a8a8" stroke-width=".9"/>${on ? '<circle cx="4" cy="4" r="1.700" fill="#444"/>' : ''}</svg>
    <span class="ml-[9px] pt-[2px]">${text}</span>${on ? '<svg class="ml-[4px] mb-[2px] w-[12px] h-[9px]"><use href="#check"/></svg>' : ''}
  </label>`;
q1.innerHTML = [['125.84M', 1], ['397.5M'], ['4.91bn'], ['251.79M']].map(option).join('');
q2.innerHTML = [['125.84M'], ['397.5M'], ['4.91bn'], ['251.79M', 1]].map(option).join('');

const field = ([name, sum, on]) => `
  <div class="w-[170px] h-[21px] shrink-0 rounded-[2px] border border-[#333] bg-[#666] flex items-center">
    <span class="ml-[27px] w-[14px] flex justify-center">${on
      ? '<svg class="size-[12px]" viewBox="0 0 12 12"><path fill="#f2c811" d="M0 0h12v12H0z"/><path d="M3 6l2 2 4-4" fill="none" stroke="#333"/></svg>'
      : '<i class="size-[10px] bg-white"></i>'}</span>
    <span class="ml-[4px] w-[10px] pt-[2px]">${sum ? '<svg class="w-[9px] h-[9px]" viewBox="0 0 9 9"><path d="M8.500 2V.5H1L5 4.500l-4 4h7.500V7" fill="none" stroke="#b0b0b0"/></svg>' : ''}</span>
    <span class="ml-[6px] pt-[5px]">${name}</span>
  </div>`;
f1.innerHTML = [['Date'], ['Month'], ['MonthID'], ['MonthName'], ['MonthNo'], ['Quarter'], ['Year', 0, 1]].map(field).join('');
f2.innerHTML = [['Date'], ['ProductID', 1], ['Revenue', 1], ['Units', 1], ['Zip']].map(field).join('');

const box = ([text, on]) => `
  <div class="h-[22px] flex items-center gap-[7px]"><span class="size-[13px] shrink-0 border border-[#777] bg-white">${on ? '<svg class="size-[11px]"><use href="#tick"/></svg>' : ''}</span>${text}</div>`;
checks.innerHTML = `
  <div class="w-[136px] pl-[1px]">${[['Show Gridlines', 1], ['Snap Objects to Grid', 1], ['Lock Objects']].map(box).join('')}</div>
  <div class="w-[114px] pl-px text-[10.900px]">${[['Bookmarks Pane'], ['Selection Pane'], ['Sync slicers']].map(box).join('')}</div>
  <div class="pl-px text-[10.900px]">${box(['Field Properties'])}</div>`;
</script>
</body>
</html>
